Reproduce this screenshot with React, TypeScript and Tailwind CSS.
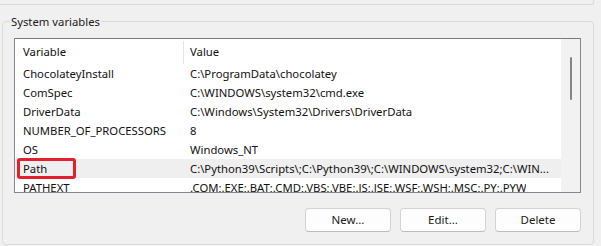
const font = { fontFamily: '"Noto Sans", "Open Sans", sans-serif' };

const rows = [
  { name: "ChocolateyInstall", value: "C:\\ProgramData\\chocolatey" },
  { name: "ComSpec", value: "C:\\WINDOWS\\system32\\cmd.exe" },
  { name: "DriverData", value: "C:\\Windows\\System32\\Drivers\\DriverData" },
  { name: "NUMBER_OF_PROCESSORS", value: "8" },
  { name: "OS", value: "Windows_NT" },
  {
    name: "Path",
    value: "C:\\Python39\\Scripts\\;C:\\Python39\\;C:\\WINDOWS\\system32;C:\\WIN...",
  },
  {
    name: "PATHEXT",
    value: ".COM;.EXE;.BAT;.CMD;.VBS;.VBE;.JS;.JSE;.WSF;.WSH;.MSC;.PY;.PYW",
  },
];

const Button = ({ label }: { label: string }) => (
  <button className="w-[86px] h-[24px] flex items-center justify-center bg-[#fdfdfd] border border-[#d3d3d3] border-b-[#bdbdbd] rounded-[4px] text-[11.5px] text-[#1b1b1b]">
    {label}
  </button>
);

export default function App() {
  return (
    <div
      className="w-[601px] h-[246px] bg-[#f0f0f0] overflow-hidden text-[11.3px] text-[#111]"
      style={font}
    >
      {/* bottom of the group above */}
      <div className="h-[5px] w-[594px] border-b border-r border-[#dadada] rounded-br-[3px]" />

      {/* System variables group */}
      <div className="relative mt-[16px] ml-[2px] w-[592px] h-[224px] border border-[#dadada] rounded-[4px] pt-[16px] pl-[11px]">
        <span className="absolute -top-[8px] left-[7px] px-[1px] bg-[#f0f0f0] leading-[16px] text-[11.3px] text-[#1b1b1b]">
          System variables
        </span>

        <div className="w-[567px] h-[155px] border border-[#828790] border-t-[#7a7a7a] bg-white flex overflow-hidden">
          <div className="w-[546px] flex flex-col">
            {/* header */}
            <div className="h-[25px] flex shrink-0 items-center">
              <div className="w-[168px] pl-[8px] pt-[2px]">Variable</div>
              <div className="h-[23px] mt-[1px] border-l border-[#e5e5e5] pl-[6px] flex items-center pt-[1px]">
                Value
              </div>
            </div>
            {rows.map((r) => (
              <div
                key={r.name}
                className={`relative h-[19px] flex shrink-0 items-center whitespace-nowrap pt-[1px] ${
                  r.name === "Path" ? "bg-[#efefef]" : ""
                }`}
              >
                <div className="w-[168px] pl-[8px]">{r.name}</div>
                <div className="pl-[7px] overflow-hidden">{r.value}</div>
                {r.name === "Path" && (
                  <div className="absolute left-[2px] -top-[1px] w-[59px] h-[21px] border-[3px] border-[#e3202b] rounded-[3px]" />
                )}
              </div>
            ))}
          </div>

          {/* scrollbar */}
          <div className="w-[19px] bg-[#f2f2f2] flex justify-center">
            <div className="mt-[18px] w-[2px] h-[43px] bg-[#858585] rounded-full" />
          </div>
        </div>

        <div className="mt-[15px] w-[567px] flex justify-end gap-[9px]">
          <Button label="New..." />
          <Button label="Edit..." />
          <Button label="Delete" />
        </div>
      </div>
    </div>
  );
}
